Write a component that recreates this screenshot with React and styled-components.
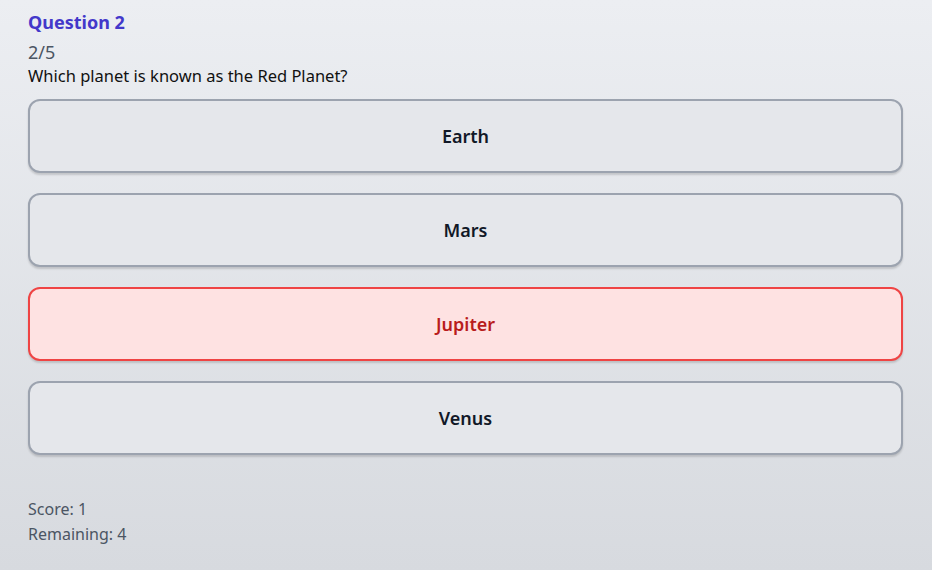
import React from 'react';
import styled, { createGlobalStyle } from 'styled-components';

const GlobalStyle = createGlobalStyle`
  html, body {
    margin: 0;
    padding: 0;
  }
  body {
    font-family: "Noto Sans", "Open Sans", sans-serif;
    background: linear-gradient(to bottom, #eceef2, #d7dadf);
    min-height: 570px;
  }
`;

export default function App() {
  return (
    <>
      <GlobalStyle />
      <Container>
        <Title>Question 2</Title>
        <Progress>2/5</Progress>
        <Prompt>Which planet is known as the Red Planet?</Prompt>
        <Options>
          {OPTIONS.map(option => (
            <Option key={option.label} $wrong={option.wrong}>
              {option.label}
            </Option>
          ))}
        </Options>
        <Stats>
          <Stat>Score: 1</Stat>
          <Stat>Remaining: 4</Stat>
        </Stats>
      </Container>
    </>
  );
}

const OPTIONS = [
  { label: 'Earth' },
  { label: 'Mars' },
  { label: 'Jupiter', wrong: true },
  { label: 'Venus' },
];

const Container = styled.div`
  display: flex;
  flex-direction: column;
  padding: 8px 29px 20px 28px;
`;

const Title = styled.div`
  font-size: 18px;
  line-height: 28px;
  font-weight: 700;
  color: #4338ca;
`;

const Progress = styled.div`
  margin-top: 4px;
  font-size: 18px;
  line-height: 24px;
  color: #4b5563;
`;

const Prompt = styled.div`
  font-size: 16.5px;
  line-height: 24px;
  color: #111111;
`;

const Options = styled.div`
  display: flex;
  flex-direction: column;
  gap: 20px;
  margin-top: 11px;
`;

const Option = styled.button`
  height: 74px;
  width: 100%;
  box-sizing: border-box;
  border-radius: 12px;
  border: 2px solid ${p => (p.$wrong ? '#ef4444' : '#9ca3af')};
  background-color: ${p => (p.$wrong ? '#fee2e2' : '#e5e7eb')};
  color: ${p => (p.$wrong ? '#b91c1c' : '#111827')};
  font-family: "Noto Sans", "Open Sans", sans-serif;
  font-size: 18px;
  font-weight: 600;
  box-shadow: 0 2px 2px rgba(0, 0, 0, 0.15);
  cursor: pointer;
`;

const Stats = styled.div`
  display: flex;
  flex-direction: column;
  margin-top: 42px;
`;

const Stat = styled.div`
  font-size: 16px;
  line-height: 25px;
  color: #4b5563;
`;
